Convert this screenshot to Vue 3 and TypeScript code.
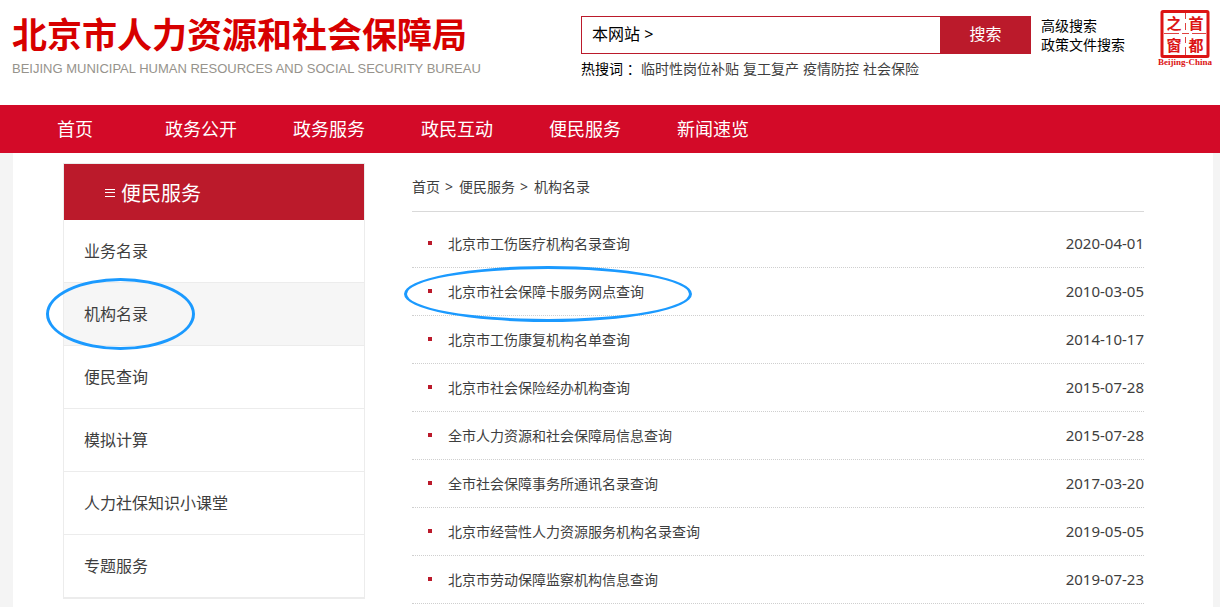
<script setup lang="ts">
import { ref } from 'vue'

interface MenuItem {
  label: string
  active?: boolean
}

interface Article {
  title: string
  date: string
  marked?: boolean
}

const keyword = ref('')

const navItems: string[] = ['首页', '政务公开', '政务服务', '政民互动', '便民服务', '新闻速览']

const hotWords: string[] = ['临时性岗位补贴', '复工复产', '疫情防控', '社会保险']

const menuItems: MenuItem[] = [
  { label: '业务名录' },
  { label: '机构名录', active: true },
  { label: '便民查询' },
  { label: '模拟计算' },
  { label: '人力社保知识小课堂' },
  { label: '专题服务' },
]

const articles: Article[] = [
  { title: '北京市工伤医疗机构名录查询', date: '2020-04-01' },
  { title: '北京市社会保障卡服务网点查询', date: '2010-03-05', marked: true },
  { title: '北京市工伤康复机构名单查询', date: '2014-10-17' },
  { title: '北京市社会保险经办机构查询', date: '2015-07-28' },
  { title: '全市人力资源和社会保障局信息查询', date: '2015-07-28' },
  { title: '全市社会保障事务所通讯名录查询', date: '2017-03-20' },
  { title: '北京市经营性人力资源服务机构名录查询', date: '2019-05-05' },
  { title: '北京市劳动保障监察机构信息查询', date: '2019-07-23' },
]
</script>

<template>
  <div class="page">
    <header class="header">
      <a class="brand" href="#">
        <h1 class="brand-name">北京市人力资源和社会保障局</h1>
        <span class="brand-sub">BEIJING MUNICIPAL HUMAN RESOURCES AND SOCIAL SECURITY BUREAU</span>
      </a>

      <div class="search">
        <form class="search-form" @submit.prevent>
          <div class="search-box">
            <button class="scope" type="button">本网站 &gt;</button>
            <input v-model="keyword" class="search-input" type="text" aria-label="搜索关键词" />
          </div>
          <button class="search-submit" type="submit">搜索</button>
        </form>
        <div class="hot">
          <span class="hot-label">热搜词 ：</span>
          <a v-for="word in hotWords" :key="word" href="#">{{ word }}</a>
        </div>
      </div>

      <div class="search-links">
        <a href="#">高级搜索</a>
        <a href="#">政策文件搜索</a>
      </div>

      <a class="emblem" href="#" aria-label="首都之窗">
        <svg width="56" height="60" viewBox="0 0 56 60">
          <rect x="5" y="2.5" width="46" height="45" rx="1" fill="none" stroke="#dc1414" stroke-width="3" />
          <path d="M28.5 4V10M28.5 14V21M28.5 28V34M28.5 38V46M7 24.5H22M25 24.5H32M35 24.5H49" stroke="#e04040" stroke-width="1" fill="none" />
          <g class="seal" fill="#dc1414" text-anchor="middle">
            <text x="17" y="20">之</text>
            <text x="39" y="20">首</text>
            <text x="17" y="42">窗</text>
            <text x="39" y="42">都</text>
          </g>
          <text class="seal-sub" x="28" y="56" text-anchor="middle" fill="#dc1414">Beijing-China</text>
        </svg>
      </a>
    </header>

    <nav class="nav">
      <a v-for="item in navItems" :key="item" href="#">{{ item }}</a>
    </nav>

    <div class="backdrop">
      <main class="content">
        <aside class="sidebar">
          <h2 class="sidebar-title">
            <svg width="10" height="9" viewBox="0 0 10 9" aria-hidden="true">
              <path d="M0 1.5H10M0 4.5H10M0 8.5H10" stroke="#fff" stroke-width="1" />
            </svg>
            便民服务
          </h2>
          <ul class="menu">
            <li v-for="item in menuItems" :key="item.label" :class="{ active: item.active }">
              <a href="#">{{ item.label }}</a>
              <span v-if="item.active" class="ring ring-menu"></span>
            </li>
          </ul>
        </aside>

        <section class="listing">
          <div class="crumbs">
            <a href="#">首页</a>
            <span>&gt;</span>
            <a href="#">便民服务</a>
            <span>&gt;</span>
            <a href="#">机构名录</a>
          </div>
          <ul class="articles">
            <li v-for="article in articles" :key="article.title">
              <a href="#">{{ article.title }}</a>
              <time :datetime="article.date">{{ article.date }}</time>
              <span v-if="article.marked" class="ring ring-article"></span>
            </li>
          </ul>
        </section>
      </main>
    </div>
  </div>
</template>

<style>
body {
  margin: 0;
  background: #f4f4f4;
}
</style>

<style scoped>
.page {
  display: flex;
  flex-direction: column;
  min-height: 100vh;
  font-family: "Noto Sans", "Noto Sans CJK SC", sans-serif;
  font-size: 14px;
  color: #3e3e3e;
}

.page * {
  box-sizing: border-box;
}

a {
  color: inherit;
  text-decoration: none;
}

ul {
  list-style: none;
  margin: 0;
  padding: 0;
}

button,
input {
  font-family: inherit;
  border: 0;
  padding: 0;
  background: none;
}

.header {
  display: flex;
  align-items: flex-start;
  height: 105px;
  padding: 0 7px 0 12px;
  background: #fff;
}

.brand {
  flex: 1;
  padding-top: 14px;
  white-space: nowrap;
}

.brand-name {
  margin: 0;
  font-size: 35px;
  line-height: 42px;
  font-weight: 700;
  color: #d70000;
}

.brand-sub {
  display: block;
  margin-top: 5px;
  font-family: "Liberation Sans", Arial, sans-serif;
  font-size: 13px;
  line-height: 16px;
  color: #96938c;
}

.search {
  width: 460px;
  padding-top: 16px;
  color: #000;
}

.search-form {
  display: flex;
  height: 38px;
  margin-right: 10px;
}

.search-box {
  flex: 1;
  display: flex;
  border: 1px solid #bb1a2b;
  border-right: 0;
}

.scope {
  padding: 0 10px 4px;
  font-size: 16px;
  color: #000;
}

.search-input {
  flex: 1;
  min-width: 0;
  font-size: 16px;
  outline: none;
}

.search-submit {
  width: 91px;
  padding-bottom: 4px;
  background: #bb1a2b;
  color: #fff;
  font-size: 16px;
}

.hot {
  display: flex;
  gap: 4px;
  margin-top: 5px;
  line-height: 20px;
  color: #3e3e3e;
}

.hot-label {
  width: 56px;
  color: #000;
  white-space: nowrap;
}

.search-links {
  width: 116px;
  padding-top: 16px;
  line-height: 19px;
  color: #000;
}

.search-links a {
  display: block;
}

.emblem {
  padding-top: 9px;
}

.emblem svg {
  display: block;
}

.seal {
  font-family: "Noto Sans CJK SC", sans-serif;
  font-weight: 700;
  font-size: 15px;
}

.seal-sub {
  font-family: "Liberation Serif", serif;
  font-weight: 700;
  font-size: 9px;
}

.nav {
  display: flex;
  padding-left: 11px;
  background: #d30a28;
  color: #fff;
  font-size: 18px;
  line-height: 48px;
  text-align: center;
}

.nav a {
  width: 128px;
}

.nav a:first-child {
  margin-right: -2px;
}

.backdrop {
  flex: 1;
  display: flex;
  padding: 0 7px 0 13px;
}

.content {
  flex: 1;
  display: flex;
  align-items: flex-start;
  gap: 47px;
  padding: 10px 69px 0 50px;
  background: #fff;
}

.sidebar {
  width: 302px;
  border: 1px solid #ececec;
}

.sidebar-title {
  display: flex;
  align-items: center;
  gap: 6px;
  height: 56px;
  margin: 0;
  padding-left: 41px;
  background: #bb1a2b;
  color: #fff;
  font-size: 20px;
  font-weight: 400;
}

.menu li {
  position: relative;
  height: 63px;
  padding-left: 20px;
  border-bottom: 1px solid #ececec;
  font-size: 16px;
  line-height: 62px;
}

.menu .active {
  background: #f6f6f6;
}

.listing {
  flex: 1;
}

.crumbs {
  display: flex;
  gap: 5px;
  height: 49px;
  border-bottom: 1px solid #d9d9d9;
  line-height: 48px;
}

.crumbs span {
  padding: 0 1px 0 0;
}

.articles {
  padding-top: 8px;
}

.articles li {
  position: relative;
  display: flex;
  align-items: center;
  height: 48px;
  padding-left: 16px;
  border-bottom: 1px dotted #cfcfcf;
  line-height: 46px;
}

.articles li::before {
  content: "";
  width: 4px;
  height: 4px;
  margin: 0 16px 2px 0;
  background: #bb1a2b;
}

.articles time {
  margin-left: auto;
  padding-bottom: 2px;
  font-size: 15px;
}

.ring {
  position: absolute;
  border: 3px solid #1b9aff;
  border-radius: 50%;
}

.ring-menu {
  left: -18px;
  top: -5px;
  width: 149px;
  height: 72px;
}

.ring-article {
  left: -8px;
  top: -2px;
  width: 288px;
  height: 56px;
}
</style>
